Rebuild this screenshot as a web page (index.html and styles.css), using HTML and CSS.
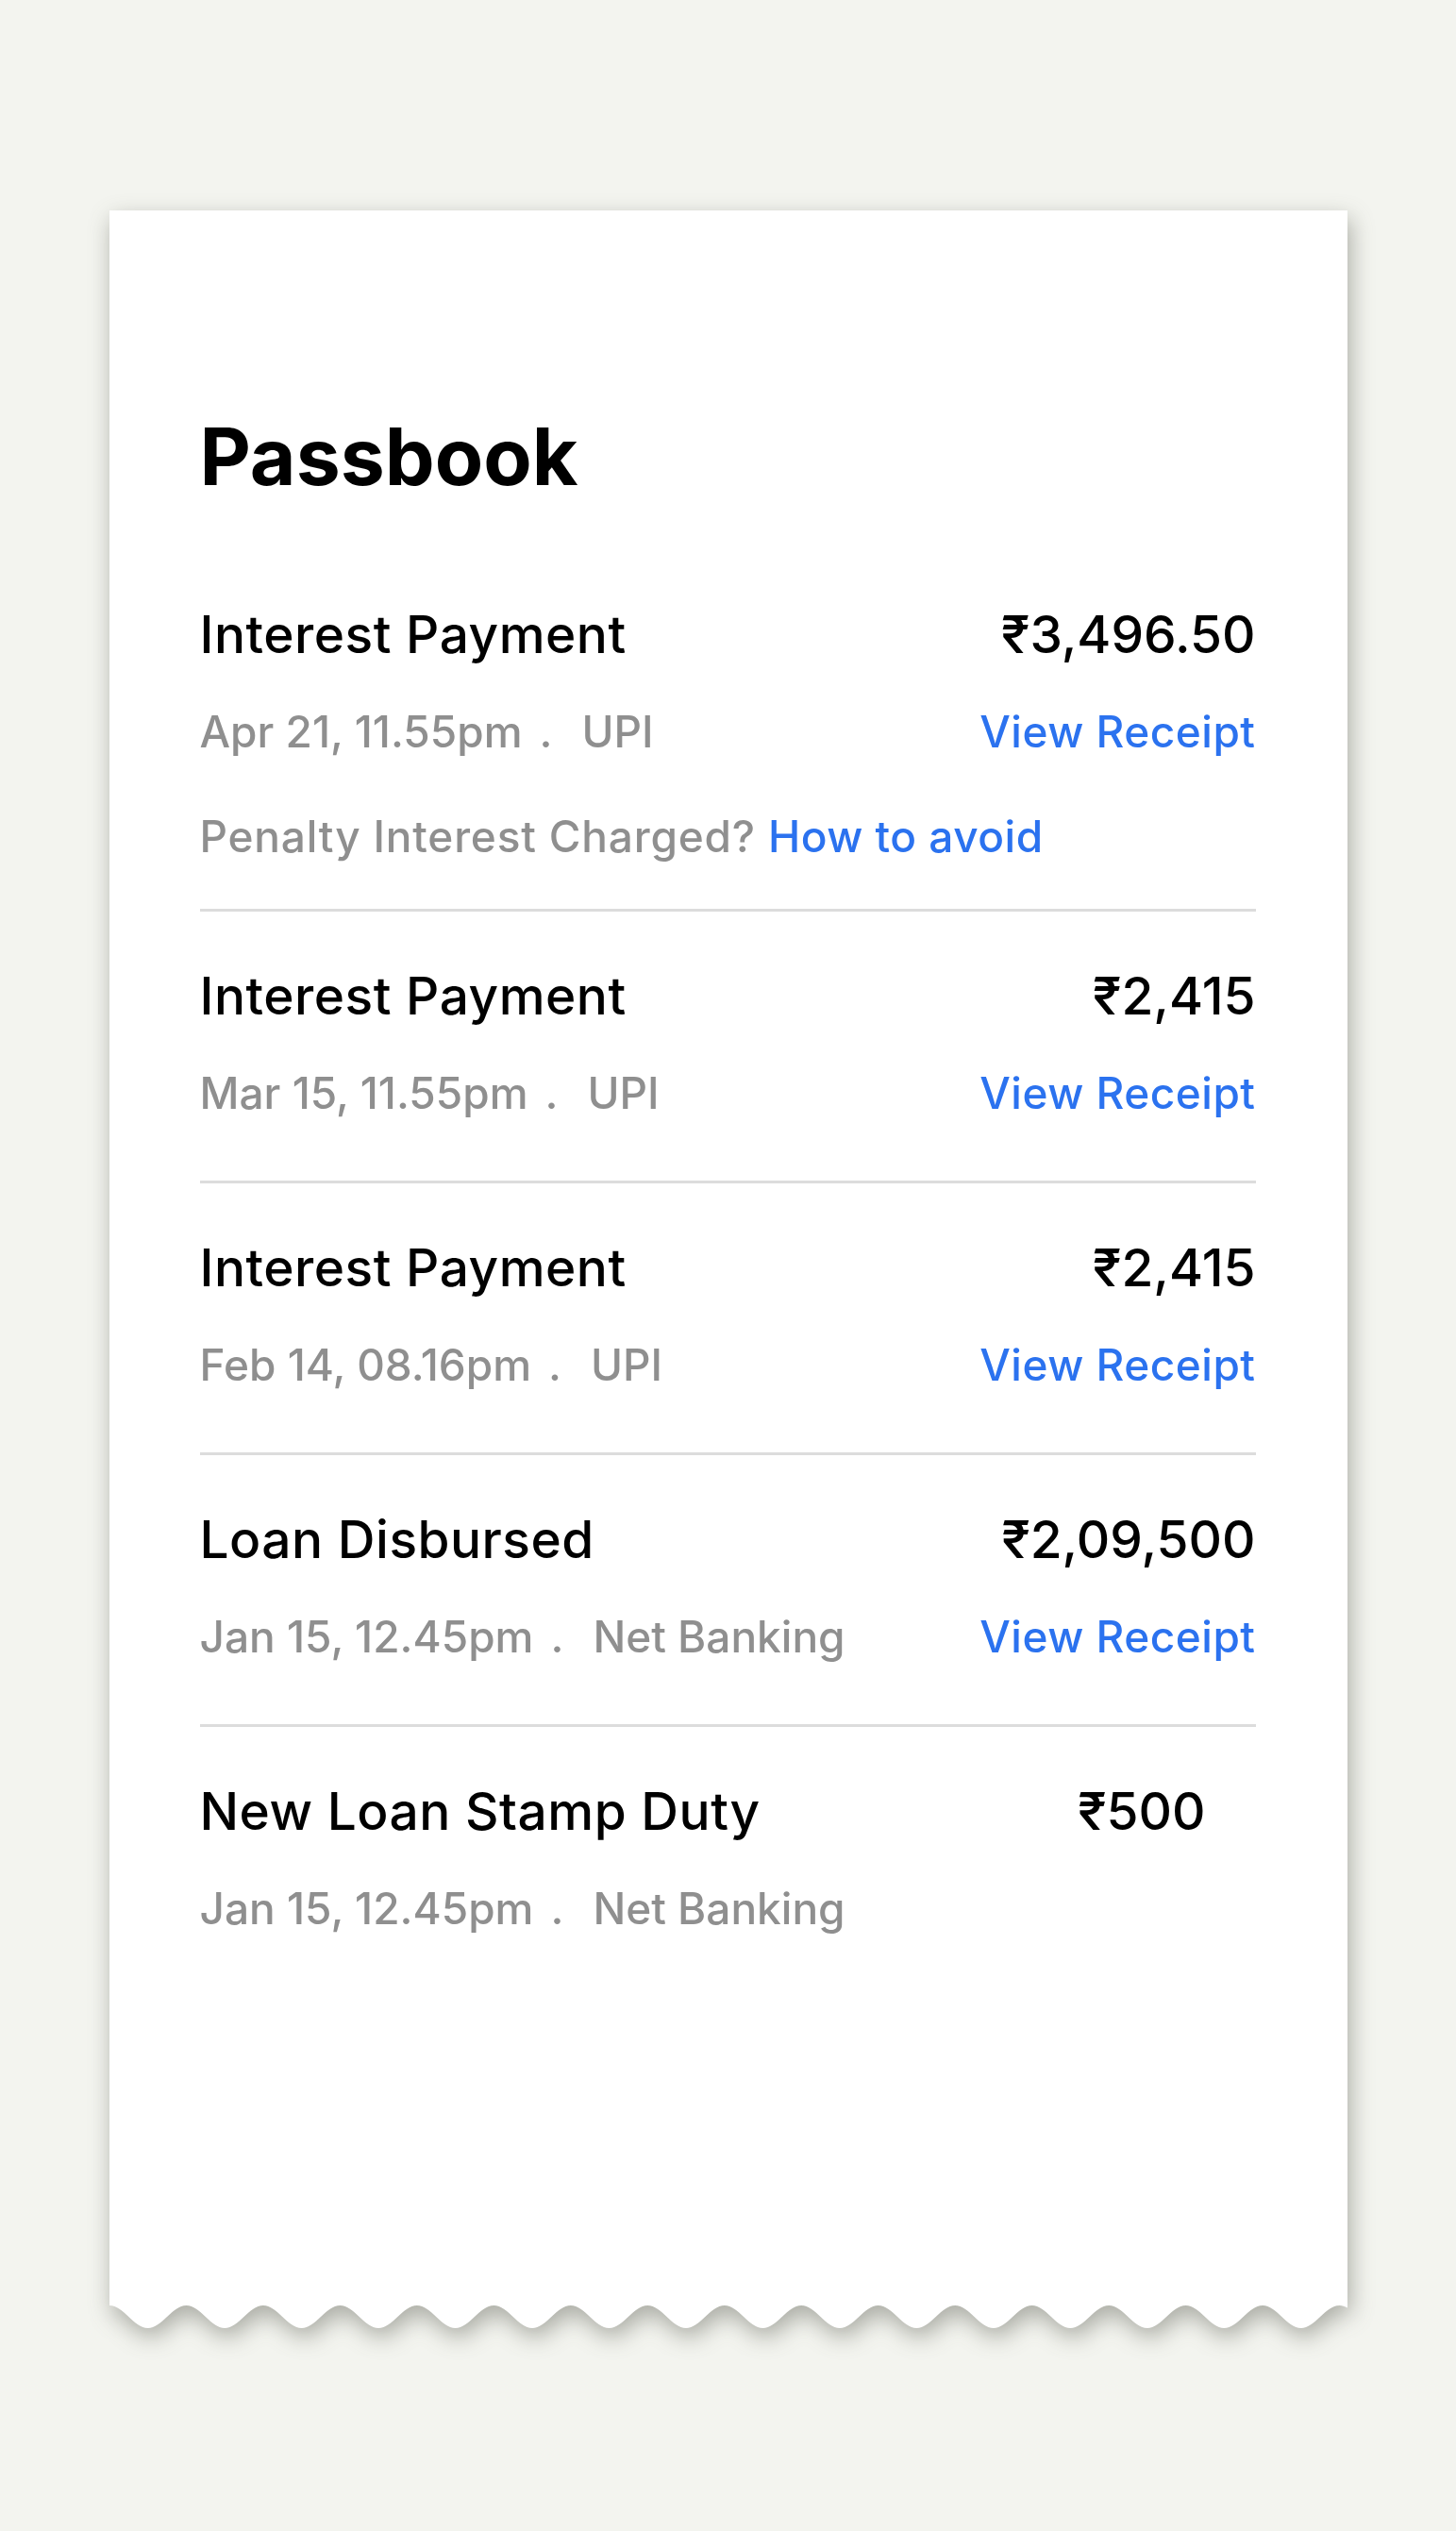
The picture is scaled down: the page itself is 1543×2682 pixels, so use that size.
FILE: index.html
```html
<!DOCTYPE html>
<html lang="en">
<head>
<meta charset="utf-8">
<title>Passbook</title>
<link rel="stylesheet" href="styles.css">
</head>
<body>
<main class="receipt">
  <section class="sheet">
    <h1 class="heading">Passbook</h1>
    <div class="entry entry--note">
      <div class="line">
        <span class="title">Interest Payment</span>
        <span class="amount">₹3,496.50</span>
      </div>
      <div class="line meta-line">
        <span class="meta">Apr 21, 11.55pm<span class="dot">.</span>UPI</span>
        <a class="link">View Receipt</a>
      </div>
      <p class="note">Penalty Interest Charged? <a class="link">How to avoid</a></p>
    </div>
    <div class="entry">
      <div class="line">
        <span class="title">Interest Payment</span>
        <span class="amount">₹2,415</span>
      </div>
      <div class="line meta-line">
        <span class="meta">Mar 15, 11.55pm<span class="dot">.</span>UPI</span>
        <a class="link">View Receipt</a>
      </div>
    </div>
    <div class="entry">
      <div class="line">
        <span class="title">Interest Payment</span>
        <span class="amount">₹2,415</span>
      </div>
      <div class="line meta-line">
        <span class="meta">Feb 14, 08.16pm<span class="dot">.</span>UPI</span>
        <a class="link">View Receipt</a>
      </div>
    </div>
    <div class="entry">
      <div class="line">
        <span class="title">Loan Disbursed</span>
        <span class="amount">₹2,09,500</span>
      </div>
      <div class="line meta-line">
        <span class="meta">Jan 15, 12.45pm<span class="dot">.</span>Net Banking</span>
        <a class="link">View Receipt</a>
      </div>
    </div>
    <div class="entry entry--last">
      <div class="line">
        <span class="title">New Loan Stamp Duty</span>
        <span class="amount amount--inset">₹500</span>
      </div>
      <div class="line meta-line">
        <span class="meta">Jan 15, 12.45pm<span class="dot">.</span>Net Banking</span>
      </div>
    </div>
  </section>
  <svg class="edge" viewBox="0 0 1312 26" preserveAspectRatio="none" aria-hidden="true">
    <path fill="#ffffff" d="M0 0 L0 1 c14.835 0 25.9 24 40.735 24 s25.9 -24 40.735 -24 s25.9 24 40.735 24 s25.9 -24 40.735 -24 s25.9 24 40.735 24 s25.9 -24 40.735 -24 s25.9 24 40.735 24 s25.9 -24 40.735 -24 s25.9 24 40.735 24 s25.9 -24 40.735 -24 s25.9 24 40.735 24 s25.9 -24 40.735 -24 s25.9 24 40.735 24 s25.9 -24 40.735 -24 s25.9 24 40.735 24 s25.9 -24 40.735 -24 s25.9 24 40.735 24 s25.9 -24 40.735 -24 s25.9 24 40.735 24 s25.9 -24 40.735 -24 s25.9 24 40.735 24 s25.9 -24 40.735 -24 s25.9 24 40.735 24 s25.9 -24 40.735 -24 s25.9 24 40.735 24 s25.9 -24 40.735 -24 s25.9 24 40.735 24 s25.9 -24 40.735 -24 s25.9 24 40.735 24 s25.9 -24 40.735 -24 s25.9 24 40.735 24 s25.9 -24 40.735 -24 s25.9 24 40.735 24 L1344 0 Z"/>
  </svg>
</main>
</body>
</html>
```

FILE: styles.css
```css
html, body {
  margin: 0;
  padding: 0;
}

body {
  background: #f3f4ef;
  min-height: 2682px;
  font-family: Inter, "Noto Sans", "Liberation Sans", sans-serif;
  color: #000;
}

.receipt {
  width: 1312px;
  margin: 223px auto 0;
  display: flex;
  flex-direction: column;
  filter: drop-shadow(3px 9px 12px rgba(70, 72, 60, 0.42));
}

.sheet {
  background: #fff;
  padding: 211px 97px 0 96px;
  height: 2220px;
  box-sizing: border-box;
}

.edge {
  display: block;
  width: 1312px;
  height: 26px;
  margin-top: -1px;
}

.heading {
  margin: 0 0 98px;
  font-size: 84px;
  line-height: 100px;
  font-weight: 700;
  letter-spacing: 0;
}

.entry {
  padding: 0 0 63px;
  border-bottom: 3px solid #dcdcdc;
}

.entry + .entry {
  padding-top: 49px;
}

.entry--note {
  padding-bottom: 47px;
}

.entry--last {
  border-bottom: none;
}

.line {
  display: flex;
  justify-content: space-between;
  align-items: baseline;
}

.title,
.amount {
  font-size: 55px;
  line-height: 80px;
  font-weight: 500;
}

.title {
  letter-spacing: 0.5px;
}

.amount--inset {
  margin-right: 53px;
}

.meta-line {
  margin-top: 33px;
}

.meta,
.link,
.note {
  font-size: 46px;
  line-height: 60px;
  font-weight: 500;
}

.meta {
  color: #8f8f8f;
}

.dot {
  margin: 0 31px 0 18px;
}

.link {
  color: #2b72ef;
  cursor: pointer;
  letter-spacing: 0.5px;
}

.note {
  margin: 51px 0 0;
  color: #8f8f8f;
  letter-spacing: 0.8px;
}
```
